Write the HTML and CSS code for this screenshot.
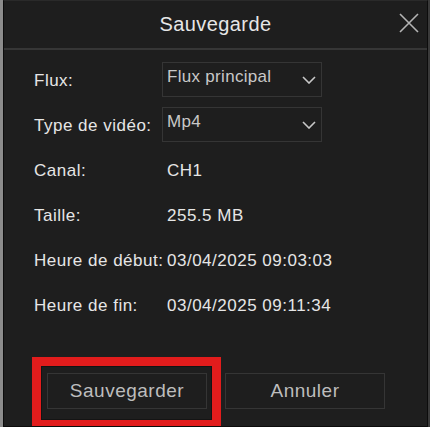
FILE: index.html
```html
<!DOCTYPE html>
<html lang="fr">
<head>
<meta charset="utf-8">
<title>Sauvegarde</title>
<link rel="stylesheet" href="styles.css">
</head>
<body>
<div class="dialog">
  <div class="header">
    <span></span>
    <h1 class="title">Sauvegarde</h1>
    <button class="close" aria-label="Fermer">
      <svg width="20" height="20" viewBox="0 0 20 20"><path d="M1 1 L19 19 M19 1 L1 19" stroke="#b4b4b4" stroke-width="1.6" fill="none"/></svg>
    </button>
  </div>
  <div class="content">
    <div class="row">
      <span class="label">Flux:</span>
      <div class="select"><span>Flux principal</span>
        <svg width="14" height="8" viewBox="0 0 14 8"><path d="M1 1 L7 7 L13 1" stroke="#c8c8c8" stroke-width="1.6" fill="none"/></svg>
      </div>
    </div>
    <div class="row">
      <span class="label">Type de vidéo:</span>
      <div class="select"><span>Mp4</span>
        <svg width="14" height="8" viewBox="0 0 14 8"><path d="M1 1 L7 7 L13 1" stroke="#c8c8c8" stroke-width="1.6" fill="none"/></svg>
      </div>
    </div>
    <div class="row">
      <span class="label">Canal:</span>
      <span class="value">CH1</span>
    </div>
    <div class="row">
      <span class="label">Taille:</span>
      <span class="value">255.5 MB</span>
    </div>
    <div class="row">
      <span class="label">Heure de début:</span>
      <span class="value">03/04/2025 09:03:03</span>
    </div>
    <div class="row">
      <span class="label">Heure de fin:</span>
      <span class="value">03/04/2025 09:11:34</span>
    </div>
  </div>
  <div class="actions">
    <button class="btn btn-save">Sauvegarder<span class="highlight"></span></button>
    <button class="btn">Annuler</button>
  </div>
</div>
</body>
</html>
```

FILE: styles.css
```css
html, body {
  margin: 0;
  padding: 0;
  height: 427px;
  overflow: hidden;
}
body {
  background: linear-gradient(to right, #8c8c8c 0, #8c8c8c 3px, #3a3a3a 3px);
  font-family: "Liberation Sans", Arial, sans-serif;
}
.dialog {
  margin-left: 3px;
  width: 423px;
  height: 425px;
  background: #1e1e1e;
  border-left: 1px solid #0c0c0c;
  border-right: 1px solid #0c0c0c;
  border-bottom: 1px solid #0c0c0c;
  border-top: 1px solid #2a2a2a;
  overflow: hidden;
  display: flex;
  flex-direction: column;
}
.header {
  height: 47px;
  display: grid;
  grid-template-columns: 1fr auto 1fr;
  align-items: center;
  border-bottom: 2px solid #363636;
}
.title {
  margin: 0;
  font-weight: normal;
  font-size: 20px;
  letter-spacing: 0.4px;
  color: #e6e6e6;
  line-height: 47px;
}
.close {
  justify-self: end;
  margin-right: 8px;
  margin-top: -4px;
  background: none;
  border: 0;
  padding: 0;
  width: 20px;
  height: 20px;
  display: flex;
}
.content {
  padding: 12px 0 0 30px;
  display: flex;
  flex-direction: column;
  gap: 10px;
}
.row {
  height: 35px;
  display: flex;
  align-items: flex-start;
}
.label {
  width: 128px;
  flex: none;
  white-space: nowrap;
  padding-top: 9px;
  font-size: 17px;
  line-height: 20px;
  letter-spacing: 0.5px;
  color: #e6e6e6;
}
.value {
  padding-top: 9px;
  padding-left: 5px;
  font-size: 17px;
  line-height: 20px;
  letter-spacing: 0.5px;
  color: #e6e6e6;
}
.select {
  box-sizing: border-box;
  width: 160px;
  height: 35px;
  border: 1px solid #353535;
  display: flex;
  align-items: center;
  justify-content: space-between;
  padding: 0 5px 0 4px;
  color: #c8c8c8;
  font-size: 17px;
  letter-spacing: 0.3px;
}
.select span {
  align-self: flex-start;
  padding-top: 4px;
  line-height: 20px;
}
.actions {
  display: flex;
  gap: 18px;
  padding-left: 43px;
  margin-top: 51px;
}
.btn {
  position: relative;
  box-sizing: border-box;
  width: 160px;
  height: 36px;
  background: #1e1e1e;
  border: 1px solid #353535;
  color: #bdbdbd;
  font-family: "Liberation Sans", Arial, sans-serif;
  font-size: 19px;
  letter-spacing: 0.5px;
  padding: 0;
}
.highlight {
  position: absolute;
  left: -16px;
  top: -17px;
  width: 189px;
  height: 72px;
  box-sizing: border-box;
  border: 9px solid #e21c1c;
  box-shadow: inset 0 0 0 1px #141414;
  pointer-events: none;
}
```
